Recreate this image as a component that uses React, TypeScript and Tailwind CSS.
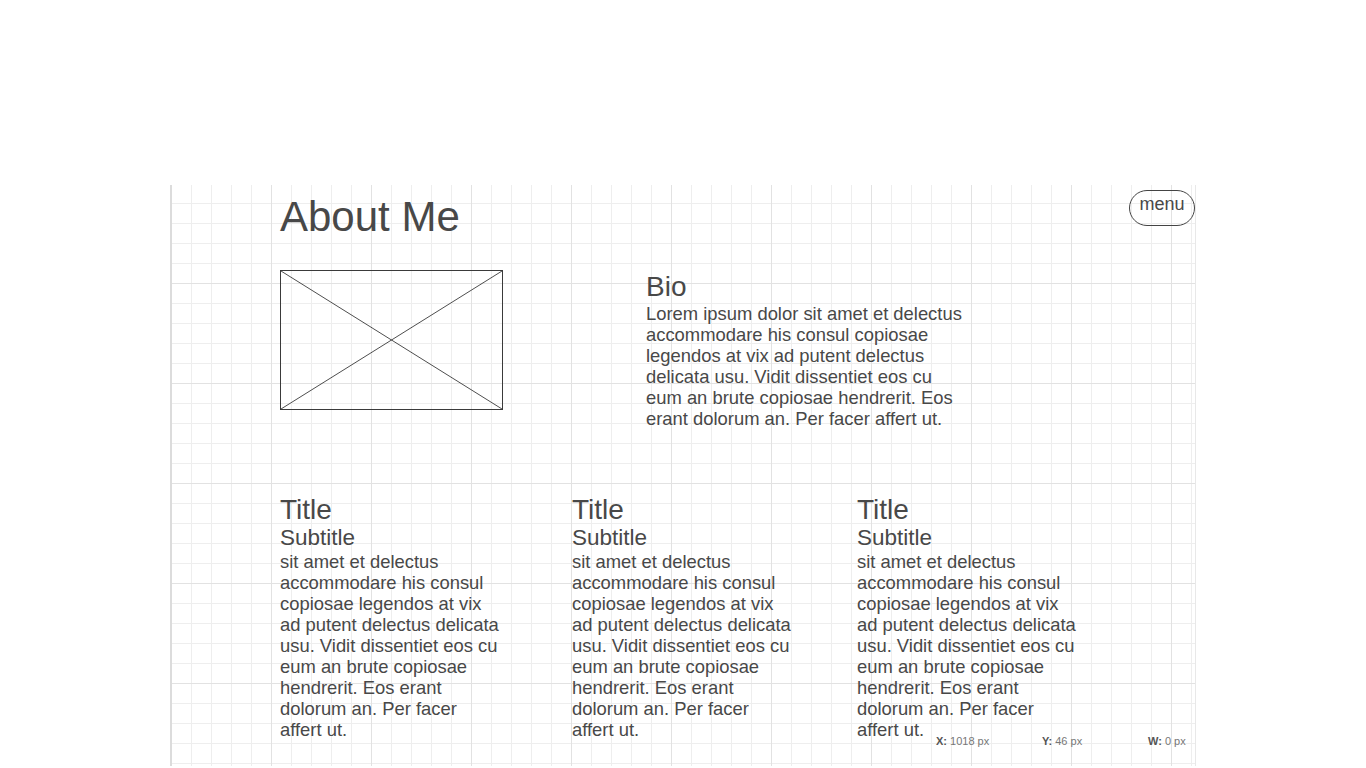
import React from 'react';

const lorem =
  'sit amet et delectus accommodare his consul copiosae legendos at vix ad putent delectus delicata usu. Vidit dissentiet eos cu eum an brute copiosae hendrerit. Eos erant dolorum an. Per facer affert ut.';

const bio =
  'Lorem ipsum dolor sit amet et delectus accommodare his consul copiosae legendos at vix ad putent delectus delicata usu. Vidit dissentiet eos cu eum an brute copiosae hendrerit. Eos erant dolorum an. Per facer affert ut.';

function ImagePlaceholder() {
  return (
    <div className="w-[223px] h-[140px] border border-[#3a3a3a] shrink-0">
      <svg className="w-full h-full" viewBox="0 0 221 138" preserveAspectRatio="none">
        <line x1="0" y1="0" x2="221" y2="138" stroke="#3a3a3a" strokeWidth="0.9" />
        <line x1="221" y1="0" x2="0" y2="138" stroke="#3a3a3a" strokeWidth="0.9" />
      </svg>
    </div>
  );
}

function Card({ className = '' }: { className?: string }) {
  return (
    <div className={`w-[221px] shrink-0 ${className}`}>
      <h2 className="text-[28px] leading-[31px]">Title</h2>
      <h3 className="text-[22.5px] leading-[26px]">Subtitle</h3>
      <p className="text-[18.4px] leading-[21px]">{lorem}</p>
    </div>
  );
}

export default function App() {
  return (
    <div className="min-h-[768px] bg-white pt-[185px] font-['Liberation_Sans',Arial,sans-serif] text-[#484848]">
      <div
        className="relative mx-auto w-[1026px] h-[581px] border-l-2 border-l-[#dcdcdc] border-r border-r-[#e8e8e8] bg-[linear-gradient(to_right,#e2e2e2_1px,transparent_1px),linear-gradient(to_bottom,#e2e2e2_1px,transparent_1px),linear-gradient(to_right,#eeeeee_1px,transparent_1px),linear-gradient(to_bottom,#eeeeee_1px,transparent_1px)] bg-size-[100px_100px,100px_100px,20px_20px,20px_20px] bg-position-[99px_98px,99px_98px,19px_18px,19px_18px]"
      >
        {/* Header */}
        <div className="flex items-start justify-between pt-[5px] pl-[108px]">
          <h1 className="mt-[6px] text-[42px] leading-[42px]">About Me</h1>
          <button className="h-[36px] w-[66px] rounded-[18px] border border-[#444] pt-[3px] text-[18px] leading-[20px] self-start flex justify-center items-start">
            menu
          </button>
        </div>

        {/* Image + bio */}
        <div className="flex items-start pl-[108px] mt-[32px]">
          <ImagePlaceholder />
          <div className="ml-[143px] w-[320px]">
            <h2 className="text-[28px] leading-[32px] pt-[1px]">Bio</h2>
            <p className="text-[18.4px] leading-[21px]">{bio}</p>
          </div>
        </div>

        {/* Cards */}
        <div className="flex items-start pl-[108px] mt-[65px]">
          <Card />
          <Card className="ml-[71px]" />
          <Card className="ml-[64px]" />
        </div>

        {/* Cursor readout */}
        <div className="absolute left-[764px] bottom-[18px] flex text-[11px] leading-[14px] text-[#777]">
          <span className="w-[106px]"><b className="text-[#555]">X:</b> 1018 px</span>
          <span className="w-[106px]"><b className="text-[#555]">Y:</b> 46 px</span>
          <span className="w-[106px]"><b className="text-[#555]">W:</b> 0 px</span>
        </div>
      </div>
    </div>
  );
}
